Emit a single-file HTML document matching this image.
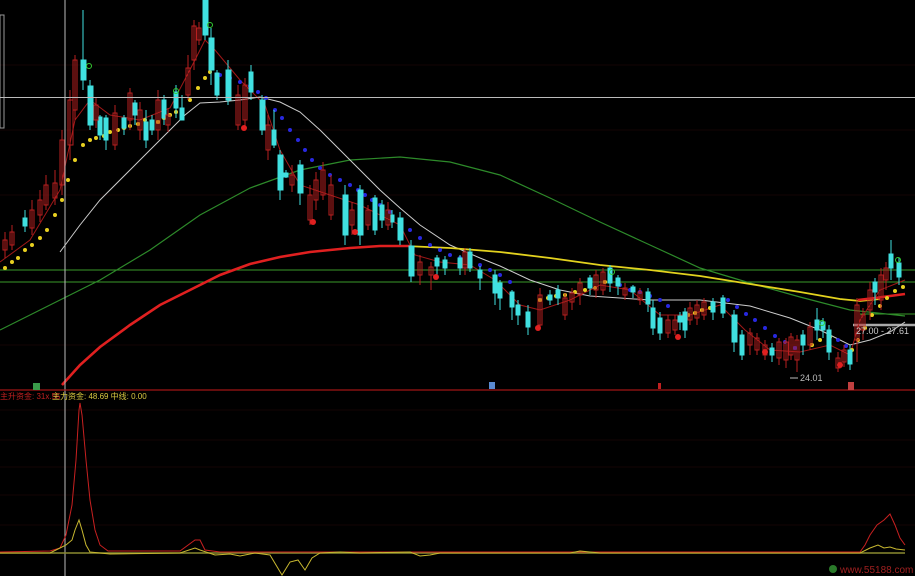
<!DOCTYPE html>
<html><head><meta charset="utf-8"><style>
html,body{margin:0;padding:0;background:#000;width:915px;height:576px;overflow:hidden}
svg{display:block}
text{font-family:"Liberation Sans","Noto Sans CJK SC",sans-serif}
</style></head><body>
<svg width="915" height="576" viewBox="0 0 915 576" xmlns="http://www.w3.org/2000/svg">
<rect width="915" height="576" fill="#000"/>
<g stroke="#140404" stroke-width="1">
<line x1="0" y1="65" x2="915" y2="65"/><line x1="0" y1="130" x2="915" y2="130"/><line x1="0" y1="195" x2="915" y2="195"/><line x1="0" y1="345" x2="915" y2="345"/>
<line x1="0" y1="410" x2="915" y2="410"/><line x1="0" y1="440" x2="915" y2="440"/><line x1="0" y1="467" x2="915" y2="467"/><line x1="0" y1="495" x2="915" y2="495"/><line x1="0" y1="525" x2="915" y2="525"/>
</g>
<rect x="0" y="15" width="4" height="113" fill="none" stroke="#999" stroke-width="1"/>
<line x1="0" y1="270" x2="915" y2="270" stroke="#3a9a2a" stroke-width="1"/>
<line x1="0" y1="282" x2="915" y2="282" stroke="#3a9a2a" stroke-width="1"/>
<line x1="860" y1="314" x2="915" y2="314" stroke="#3a9a2a" stroke-width="1"/>
<line x1="853" y1="325" x2="915" y2="325" stroke="#aaa" stroke-width="2.5"/>
<polyline fill="none" stroke="#2d8a2a" stroke-width="1.2" points="0,330 50,305 100,280 150,250 200,215 250,188 300,170 350,160 400,157 450,162 500,175 550,198 600,222 650,245 700,268 750,283 800,297 850,310 905,316"/>
<polyline fill="none" stroke="#ccc" stroke-width="1" points="60,252 80,225 100,200 130,170 160,140 185,115 200,103 220,102 240,100 260,97 280,102 300,112 320,130 340,150 360,170 380,190 400,208 420,225 450,245 480,258 500,266 530,280 560,290 590,296 620,298 650,300 700,300 750,306 790,318 820,330 850,345 870,340 890,332 905,322"/>
<polyline fill="none" stroke="#e3d21e" stroke-width="1.8" points="405,246 450,248 500,252 550,258 600,265 650,270 700,276 750,284 800,292 840,299 860,301 880,299"/>
<polyline fill="none" stroke="#e02020" stroke-width="2.6" points="62,385 80,365 100,347 130,325 160,305 190,290 220,275 250,264 280,257 310,252 350,248 380,246 410,246"/>
<polyline fill="none" stroke="#e02020" stroke-width="2.6" points="858,300 875,298 890,296 905,294"/>
<polyline fill="none" stroke="#a01818" stroke-width="1" points="0,262 30,240 60,190 75,120 90,100 110,115 140,120 170,108 195,60 205,40 215,50 240,80 265,105 280,150 300,185 330,195 360,205 400,225 415,255 440,262 470,265 495,280 520,305 540,310 570,300 600,285 630,290 660,315 690,315 720,305 745,330 770,350 800,352 830,345 850,355 860,320 880,290 905,280"/>
<g fill="#e8d020">
<circle cx="5" cy="268" r="2"/><circle cx="12" cy="262" r="2"/><circle cx="18" cy="258" r="2"/><circle cx="25" cy="250" r="2"/><circle cx="32" cy="245" r="2"/><circle cx="40" cy="238" r="2"/><circle cx="47" cy="230" r="2"/><circle cx="55" cy="215" r="2"/><circle cx="62" cy="200" r="2"/><circle cx="68" cy="180" r="2"/><circle cx="75" cy="160" r="2"/><circle cx="83" cy="145" r="2"/><circle cx="90" cy="140" r="2"/><circle cx="96" cy="138" r="2"/><circle cx="104" cy="136" r="2"/><circle cx="110" cy="132" r="2"/><circle cx="118" cy="130" r="2"/><circle cx="124" cy="128" r="2"/><circle cx="130" cy="126" r="2"/><circle cx="138" cy="124" r="2"/><circle cx="145" cy="120" r="2"/><circle cx="152" cy="124" r="2"/><circle cx="158" cy="122" r="2"/><circle cx="164" cy="118" r="2"/><circle cx="170" cy="115" r="2"/><circle cx="176" cy="112" r="2"/><circle cx="182" cy="110" r="2"/><circle cx="190" cy="100" r="2"/><circle cx="198" cy="88" r="2"/><circle cx="205" cy="78" r="2"/><circle cx="210" cy="72" r="2"/>
<circle cx="540" cy="300" r="2"/><circle cx="548" cy="298" r="2"/><circle cx="556" cy="296" r="2"/><circle cx="565" cy="295" r="2"/><circle cx="575" cy="292" r="2"/><circle cx="585" cy="290" r="2"/><circle cx="595" cy="288" r="2"/><circle cx="605" cy="282" r="2"/>
<circle cx="680" cy="318" r="2"/><circle cx="688" cy="315" r="2"/><circle cx="695" cy="313" r="2"/><circle cx="702" cy="310" r="2"/><circle cx="710" cy="308" r="2"/>
<circle cx="812" cy="345" r="2"/><circle cx="820" cy="340" r="2"/><circle cx="830" cy="337" r="2"/><circle cx="852" cy="350" r="2"/><circle cx="858" cy="340" r="2"/><circle cx="865" cy="328" r="2"/><circle cx="872" cy="315" r="2"/><circle cx="880" cy="306" r="2"/><circle cx="887" cy="298" r="2"/><circle cx="895" cy="291" r="2"/><circle cx="903" cy="287" r="2"/>
</g>
<g fill="#2828e0">
<circle cx="220" cy="75" r="2"/><circle cx="230" cy="78" r="2"/><circle cx="240" cy="82" r="2"/><circle cx="250" cy="86" r="2"/><circle cx="258" cy="92" r="2"/><circle cx="266" cy="98" r="2"/><circle cx="275" cy="110" r="2"/><circle cx="282" cy="118" r="2"/><circle cx="290" cy="130" r="2"/><circle cx="298" cy="140" r="2"/><circle cx="305" cy="150" r="2"/><circle cx="312" cy="160" r="2"/><circle cx="320" cy="168" r="2"/><circle cx="330" cy="175" r="2"/><circle cx="340" cy="180" r="2"/><circle cx="350" cy="185" r="2"/><circle cx="358" cy="190" r="2"/><circle cx="365" cy="195" r="2"/><circle cx="372" cy="200" r="2"/><circle cx="380" cy="205" r="2"/><circle cx="390" cy="212" r="2"/><circle cx="400" cy="222" r="2"/><circle cx="410" cy="230" r="2"/><circle cx="420" cy="238" r="2"/><circle cx="430" cy="245" r="2"/><circle cx="440" cy="250" r="2"/><circle cx="450" cy="255" r="2"/><circle cx="460" cy="258" r="2"/><circle cx="470" cy="262" r="2"/><circle cx="480" cy="265" r="2"/><circle cx="490" cy="270" r="2"/><circle cx="500" cy="275" r="2"/><circle cx="510" cy="282" r="2"/>
<circle cx="620" cy="285" r="2"/><circle cx="630" cy="290" r="2"/><circle cx="640" cy="292" r="2"/><circle cx="650" cy="296" r="2"/><circle cx="660" cy="300" r="2"/><circle cx="668" cy="306" r="2"/>
<circle cx="728" cy="300" r="2"/><circle cx="737" cy="307" r="2"/><circle cx="746" cy="314" r="2"/><circle cx="755" cy="320" r="2"/><circle cx="765" cy="328" r="2"/><circle cx="775" cy="336" r="2"/><circle cx="785" cy="342" r="2"/><circle cx="795" cy="348" r="2"/><circle cx="838" cy="340" r="2"/><circle cx="846" cy="346" r="2"/>
</g>
<g stroke="#40e0e0" fill="#40e0e0" stroke-width="1">
<line x1="25" y1="210" x2="25" y2="232"/><rect x="23" y="218" width="4" height="8"/>
<line x1="83" y1="10" x2="83" y2="90"/><rect x="81" y="60" width="5" height="20"/>
<line x1="90" y1="80" x2="90" y2="130"/><rect x="88" y="86" width="5" height="39"/>
<line x1="100" y1="115" x2="100" y2="140"/><rect x="98" y="117" width="4" height="18"/>
<line x1="106" y1="115" x2="106" y2="150"/><rect x="104" y="118" width="4" height="22"/>
<line x1="124" y1="115" x2="124" y2="135"/><rect x="122" y="118" width="4" height="10"/>
<line x1="135" y1="100" x2="135" y2="125"/><rect x="133" y="103" width="4" height="12"/>
<line x1="146" y1="110" x2="146" y2="148"/><rect x="144" y="122" width="4" height="18"/>
<line x1="152" y1="115" x2="152" y2="135"/><rect x="150" y="120" width="4" height="10"/>
<line x1="164" y1="95" x2="164" y2="125"/><rect x="162" y="100" width="4" height="18"/>
<line x1="176" y1="85" x2="176" y2="118"/><rect x="174" y="92" width="4" height="16"/>
<line x1="182" y1="95" x2="182" y2="118"/><rect x="180" y="108" width="4" height="12"/>
<line x1="205" y1="0" x2="205" y2="40"/><rect x="203" y="0" width="5" height="35"/>
<line x1="211" y1="28" x2="211" y2="85"/><rect x="209" y="38" width="5" height="32"/>
<line x1="217" y1="70" x2="217" y2="100"/><rect x="215" y="73" width="4" height="22"/>
<line x1="228" y1="60" x2="228" y2="105"/><rect x="226" y="70" width="5" height="30"/>
<line x1="251" y1="65" x2="251" y2="100"/><rect x="249" y="72" width="4" height="20"/>
<line x1="262" y1="95" x2="262" y2="135"/><rect x="260" y="100" width="5" height="30"/>
<line x1="274" y1="110" x2="274" y2="148"/><rect x="272" y="130" width="4" height="15"/>
<line x1="280" y1="150" x2="280" y2="200"/><rect x="278" y="155" width="5" height="35"/>
<line x1="286" y1="170" x2="286" y2="178"/><rect x="284" y="173" width="4" height="4"/>
<line x1="300" y1="160" x2="300" y2="205"/><rect x="298" y="165" width="5" height="28"/>
<line x1="345" y1="185" x2="345" y2="245"/><rect x="343" y="195" width="5" height="40"/>
<line x1="360" y1="185" x2="360" y2="245"/><rect x="358" y="190" width="5" height="45"/>
<line x1="375" y1="195" x2="375" y2="235"/><rect x="373" y="198" width="4" height="32"/>
<line x1="382" y1="200" x2="382" y2="228"/><rect x="380" y="205" width="4" height="15"/>
<line x1="392" y1="210" x2="392" y2="228"/><rect x="390" y="215" width="4" height="7"/>
<line x1="400" y1="212" x2="400" y2="245"/><rect x="398" y="218" width="5" height="22"/>
<line x1="411" y1="240" x2="411" y2="282"/><rect x="409" y="246" width="5" height="30"/>
<line x1="437" y1="255" x2="437" y2="275"/><rect x="435" y="258" width="4" height="8"/>
<line x1="445" y1="256" x2="445" y2="275"/><rect x="443" y="260" width="4" height="8"/>
<line x1="460" y1="255" x2="460" y2="275"/><rect x="458" y="258" width="4" height="10"/>
<line x1="470" y1="248" x2="470" y2="272"/><rect x="468" y="252" width="4" height="16"/>
<line x1="480" y1="266" x2="480" y2="290"/><rect x="478" y="270" width="4" height="8"/>
<line x1="495" y1="270" x2="495" y2="305"/><rect x="493" y="275" width="4" height="18"/>
<line x1="500" y1="280" x2="500" y2="310"/><rect x="498" y="283" width="4" height="15"/>
<line x1="512" y1="290" x2="512" y2="320"/><rect x="510" y="292" width="4" height="15"/>
<line x1="518" y1="300" x2="518" y2="325"/><rect x="516" y="305" width="4" height="10"/>
<line x1="528" y1="305" x2="528" y2="335"/><rect x="526" y="312" width="4" height="15"/>
<line x1="550" y1="290" x2="550" y2="305"/><rect x="548" y="295" width="4" height="5"/>
<line x1="558" y1="285" x2="558" y2="305"/><rect x="556" y="290" width="4" height="8"/>
<line x1="590" y1="275" x2="590" y2="295"/><rect x="588" y="278" width="4" height="10"/>
<line x1="610" y1="265" x2="610" y2="292"/><rect x="608" y="268" width="4" height="15"/>
<line x1="618" y1="275" x2="618" y2="295"/><rect x="616" y="278" width="4" height="8"/>
<line x1="633" y1="285" x2="633" y2="298"/><rect x="631" y="287" width="4" height="5"/>
<line x1="648" y1="288" x2="648" y2="312"/><rect x="646" y="292" width="4" height="12"/>
<line x1="653" y1="300" x2="653" y2="335"/><rect x="651" y="308" width="4" height="20"/>
<line x1="660" y1="312" x2="660" y2="340"/><rect x="658" y="318" width="4" height="15"/>
<line x1="680" y1="312" x2="680" y2="330"/><rect x="678" y="316" width="4" height="6"/>
<line x1="685" y1="308" x2="685" y2="338"/><rect x="683" y="312" width="4" height="18"/>
<line x1="713" y1="298" x2="713" y2="320"/><rect x="711" y="302" width="4" height="10"/>
<line x1="723" y1="295" x2="723" y2="318"/><rect x="721" y="298" width="4" height="15"/>
<line x1="734" y1="310" x2="734" y2="352"/><rect x="732" y="315" width="5" height="27"/>
<line x1="742" y1="330" x2="742" y2="360"/><rect x="740" y="335" width="4" height="20"/>
<line x1="772" y1="343" x2="772" y2="362"/><rect x="770" y="348" width="4" height="7"/>
<line x1="803" y1="330" x2="803" y2="355"/><rect x="801" y="335" width="4" height="10"/>
<line x1="817" y1="308" x2="817" y2="340"/><rect x="815" y="320" width="4" height="10"/>
<line x1="823" y1="318" x2="823" y2="338"/><rect x="821" y="322" width="4" height="8"/>
<line x1="829" y1="325" x2="829" y2="360"/><rect x="827" y="330" width="4" height="22"/>
<line x1="850" y1="345" x2="850" y2="370"/><rect x="848" y="350" width="4" height="14"/>
<line x1="875" y1="278" x2="875" y2="305"/><rect x="873" y="282" width="4" height="10"/>
<line x1="891" y1="240" x2="891" y2="280"/><rect x="889" y="254" width="4" height="14"/>
<line x1="899" y1="258" x2="899" y2="285"/><rect x="897" y="263" width="4" height="14"/>
</g>
<g stroke="#b82020" fill="none" stroke-width="1">
<line x1="5" y1="232" x2="5" y2="258"/><rect x="3" y="240" width="4" height="10"/>
<line x1="12" y1="225" x2="12" y2="250"/><rect x="10" y="232" width="4" height="13"/>
<line x1="32" y1="200" x2="32" y2="235"/><rect x="30" y="210" width="4" height="18"/>
<line x1="40" y1="190" x2="40" y2="222"/><rect x="38" y="200" width="4" height="15"/>
<line x1="46" y1="175" x2="46" y2="210"/><rect x="44" y="185" width="4" height="20"/>
<line x1="55" y1="170" x2="55" y2="205"/><rect x="53" y="183" width="4" height="15"/>
<line x1="62" y1="130" x2="62" y2="195"/><rect x="60" y="140" width="4" height="45"/>
<line x1="70" y1="90" x2="70" y2="160"/><rect x="68" y="100" width="5" height="45"/>
<line x1="75" y1="55" x2="75" y2="120"/><rect x="73" y="60" width="4" height="50"/>
<line x1="96" y1="98" x2="96" y2="128"/><rect x="94" y="105" width="4" height="15"/>
<line x1="115" y1="105" x2="115" y2="150"/><rect x="113" y="113" width="4" height="32"/>
<line x1="130" y1="88" x2="130" y2="130"/><rect x="128" y="93" width="4" height="27"/>
<line x1="140" y1="102" x2="140" y2="140"/><rect x="138" y="110" width="4" height="20"/>
<line x1="158" y1="90" x2="158" y2="140"/><rect x="156" y="100" width="4" height="30"/>
<line x1="168" y1="108" x2="168" y2="132"/><rect x="166" y="115" width="4" height="10"/>
<line x1="188" y1="55" x2="188" y2="100"/><rect x="186" y="68" width="4" height="27"/>
<line x1="194" y1="20" x2="194" y2="70"/><rect x="192" y="26" width="4" height="34"/>
<line x1="199" y1="22" x2="199" y2="45"/><rect x="197" y="28" width="4" height="12"/>
<line x1="238" y1="85" x2="238" y2="130"/><rect x="236" y="95" width="4" height="30"/>
<line x1="245" y1="78" x2="245" y2="130"/><rect x="243" y="85" width="4" height="35"/>
<line x1="268" y1="115" x2="268" y2="160"/><rect x="266" y="125" width="4" height="25"/>
<line x1="292" y1="165" x2="292" y2="192"/><rect x="290" y="175" width="4" height="10"/>
<line x1="310" y1="185" x2="310" y2="225"/><rect x="308" y="195" width="4" height="25"/>
<line x1="316" y1="172" x2="316" y2="210"/><rect x="314" y="180" width="4" height="20"/>
<line x1="323" y1="162" x2="323" y2="200"/><rect x="321" y="170" width="4" height="25"/>
<line x1="331" y1="175" x2="331" y2="220"/><rect x="329" y="185" width="4" height="30"/>
<line x1="352" y1="202" x2="352" y2="235"/><rect x="350" y="210" width="4" height="15"/>
<line x1="368" y1="205" x2="368" y2="230"/><rect x="366" y="210" width="4" height="15"/>
<line x1="388" y1="202" x2="388" y2="230"/><rect x="386" y="210" width="4" height="15"/>
<line x1="420" y1="255" x2="420" y2="285"/><rect x="418" y="262" width="4" height="13"/>
<line x1="431" y1="262" x2="431" y2="290"/><rect x="429" y="267" width="4" height="8"/>
<line x1="465" y1="248" x2="465" y2="275"/><rect x="463" y="252" width="4" height="16"/>
<line x1="540" y1="288" x2="540" y2="330"/><rect x="538" y="295" width="4" height="30"/>
<line x1="565" y1="293" x2="565" y2="320"/><rect x="563" y="298" width="4" height="17"/>
<line x1="572" y1="288" x2="572" y2="310"/><rect x="570" y="293" width="4" height="9"/>
<line x1="580" y1="278" x2="580" y2="305"/><rect x="578" y="283" width="4" height="12"/>
<line x1="596" y1="270" x2="596" y2="298"/><rect x="594" y="275" width="4" height="15"/>
<line x1="603" y1="268" x2="603" y2="295"/><rect x="601" y="272" width="4" height="18"/>
<line x1="625" y1="283" x2="625" y2="300"/><rect x="623" y="288" width="4" height="7"/>
<line x1="640" y1="288" x2="640" y2="305"/><rect x="638" y="292" width="4" height="8"/>
<line x1="668" y1="315" x2="668" y2="338"/><rect x="666" y="320" width="4" height="13"/>
<line x1="675" y1="315" x2="675" y2="335"/><rect x="673" y="320" width="4" height="10"/>
<line x1="690" y1="302" x2="690" y2="325"/><rect x="688" y="308" width="4" height="12"/>
<line x1="697" y1="300" x2="697" y2="325"/><rect x="695" y="305" width="4" height="13"/>
<line x1="704" y1="298" x2="704" y2="320"/><rect x="702" y="302" width="4" height="13"/>
<line x1="750" y1="328" x2="750" y2="355"/><rect x="748" y="333" width="4" height="12"/>
<line x1="757" y1="333" x2="757" y2="355"/><rect x="755" y="338" width="4" height="12"/>
<line x1="765" y1="340" x2="765" y2="360"/><rect x="763" y="345" width="4" height="10"/>
<line x1="779" y1="338" x2="779" y2="365"/><rect x="777" y="342" width="4" height="16"/>
<line x1="786" y1="338" x2="786" y2="368"/><rect x="784" y="342" width="4" height="18"/>
<line x1="791" y1="333" x2="791" y2="360"/><rect x="789" y="337" width="4" height="18"/>
<line x1="797" y1="335" x2="797" y2="372"/><rect x="795" y="340" width="4" height="20"/>
<line x1="810" y1="322" x2="810" y2="350"/><rect x="808" y="327" width="4" height="18"/>
<line x1="838" y1="352" x2="838" y2="372"/><rect x="836" y="358" width="4" height="10"/>
<line x1="844" y1="345" x2="844" y2="367"/><rect x="842" y="350" width="4" height="12"/>
<line x1="857" y1="298" x2="857" y2="362"/><rect x="855" y="305" width="4" height="35"/>
<line x1="863" y1="308" x2="863" y2="340"/><rect x="861" y="315" width="4" height="15"/>
<line x1="870" y1="282" x2="870" y2="320"/><rect x="868" y="290" width="4" height="20"/>
<line x1="881" y1="268" x2="881" y2="310"/><rect x="879" y="275" width="4" height="25"/>
<line x1="886" y1="262" x2="886" y2="290"/><rect x="884" y="268" width="4" height="12"/>
</g>
<g fill="#e02020"><circle cx="244" cy="128" r="3"/><circle cx="313" cy="222" r="3"/><circle cx="355" cy="232" r="3"/><circle cx="436" cy="277" r="3"/><circle cx="538" cy="328" r="3"/><circle cx="678" cy="337" r="3"/><circle cx="765" cy="352" r="3"/><circle cx="840" cy="365" r="3"/></g>
<g fill="none" stroke="#3c3" stroke-width="1"><circle cx="89" cy="66" r="2.5"/><circle cx="176" cy="91" r="2.5"/><circle cx="210" cy="25" r="2.5"/><circle cx="612" cy="272" r="2.5"/><circle cx="822" cy="323" r="2.5"/><circle cx="898" cy="260" r="2.5"/></g>
<line x1="790" y1="378" x2="798" y2="378" stroke="#bbb"/>
<text x="800" y="381" fill="#bbb" font-size="9">24.01</text>
<text x="856" y="334" fill="#ccc" font-size="9">27.00 - 27.61</text>
<line x1="65" y1="0" x2="65" y2="576" stroke="#bbb" stroke-width="1"/>
<line x1="0" y1="97.5" x2="915" y2="97.5" stroke="#bbb" stroke-width="1"/>
<line x1="0" y1="390" x2="915" y2="390" stroke="#a01515" stroke-width="1.2"/>
<rect x="33" y="383" width="7" height="7" fill="#3a9a4a"/>
<rect x="489" y="382" width="6" height="7" fill="#5a8ad0"/>
<rect x="658" y="383" width="3" height="6" fill="#c02020"/>
<rect x="848" y="382" width="6" height="8" fill="#c04040"/>
<text x="0" y="399" fill="#c02020" font-size="8">主升资金: 31x.55</text>
<text x="52" y="399" fill="#d8c840" font-size="8">主力资金: 48.69 中线: 0.00</text>
<line x1="0" y1="553" x2="905" y2="553" stroke="#8a8a30" stroke-width="1.5"/>
<polyline fill="none" stroke="#c82020" stroke-width="1" points="0,552 50,551 60,548 66,535 72,505 76,460 79,410 80,403 82,415 86,460 90,500 95,530 100,545 108,551 180,551 195,540 200,540 205,550 220,552 860,552 865,545 870,535 877,525 884,520 890,514 895,525 900,538 905,545"/>
<polyline fill="none" stroke="#c8b830" stroke-width="1" points="0,553 50,553 60,548 66,545 72,540 75,530 79,520 82,530 86,545 90,552 110,554 180,553 195,548 200,550 215,555 230,554 240,556 255,553 270,555 282,575 290,562 298,560 305,570 312,558 320,553 340,552 360,553 410,552 420,556 430,555 440,553 570,553 580,551 600,553 860,553 870,548 878,545 884,548 890,547 896,549 905,550"/>
<circle cx="833" cy="569" r="4" fill="#2a7a2a"/>
<text x="840" y="573" fill="#a02020" font-size="10">www.55188.com</text>
</svg>
</body></html>
